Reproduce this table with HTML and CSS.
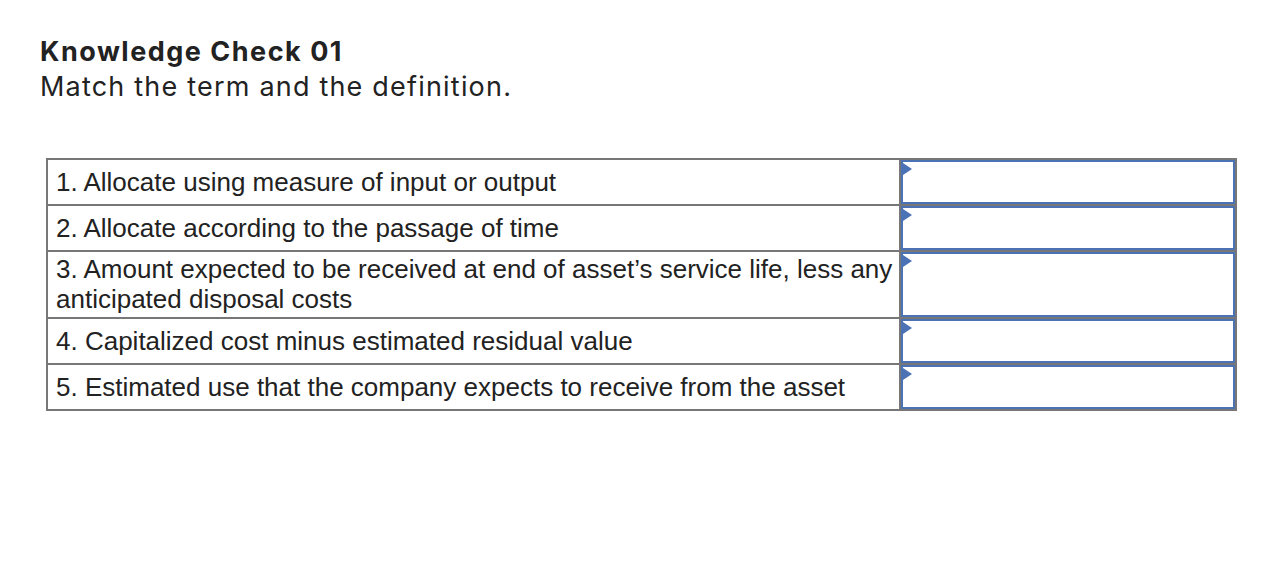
FILE: index.html
```html
<!DOCTYPE html>
<html lang="en">
<head>
<meta charset="utf-8">
<title>Knowledge Check 01</title>
<link rel="stylesheet" href="styles.css">
</head>
<body>
<main class="page">
  <header class="intro">
    <h1 class="title">Knowledge Check 01</h1>
    <p class="subtitle">Match the term and the definition.</p>
  </header>
  <table class="match">
    <colgroup>
      <col class="col-term">
      <col class="col-answer">
    </colgroup>
    <tbody>
      <tr>
        <td class="term">1. Allocate using measure of input or output</td>
        <td class="answer"><div class="dropbox"><span class="marker"></span></div></td>
      </tr>
      <tr>
        <td class="term">2. Allocate according to the passage of time</td>
        <td class="answer"><div class="dropbox"><span class="marker"></span></div></td>
      </tr>
      <tr>
        <td class="term">3. Amount expected to be received at end of asset’s service life, less any anticipated disposal costs</td>
        <td class="answer"><div class="dropbox tall"><span class="marker"></span></div></td>
      </tr>
      <tr>
        <td class="term">4. Capitalized cost minus estimated residual value</td>
        <td class="answer"><div class="dropbox"><span class="marker"></span></div></td>
      </tr>
      <tr>
        <td class="term">5. Estimated use that the company expects to receive from the asset</td>
        <td class="answer"><div class="dropbox"><span class="marker"></span></div></td>
      </tr>
    </tbody>
  </table>
</main>
</body>
</html>
```

FILE: styles.css
```css
html, body {
  margin: 0;
  padding: 0;
  background: #ffffff;
}

.page {
  padding: 35px 0 0 40px;
  color: #222222;
}

.intro {
  margin-bottom: 55px;
}

.title {
  margin: 0;
  font-family: "Inter", "Liberation Sans", sans-serif;
  font-weight: 700;
  font-size: 27px;
  line-height: 33px;
  letter-spacing: 1.5px;
  color: #222222;
}

.subtitle {
  margin: 3px 0 0;
  font-family: "Inter", "Liberation Sans", sans-serif;
  font-weight: 400;
  font-size: 27px;
  line-height: 32px;
  letter-spacing: 1.2px;
  color: #222222;
}

.match {
  margin-left: 6px;
  width: 1189px;
  border-collapse: collapse;
  table-layout: fixed;
  font-family: "Liberation Sans", Arial, sans-serif;
  font-size: 26px;
  color: #222222;
}

.col-term {
  width: 853px;
}

.col-answer {
  width: 336px;
}

.match td {
  border: 2px solid #777777;
  vertical-align: middle;
}

.term {
  padding: 2px 2px 3px 8px;
  line-height: 30px;
}

.answer {
  padding: 0;
  height: 44px;
}

.dropbox {
  position: relative;
  box-sizing: border-box;
  height: 44px;
  border: 2px solid #4a72b4;
}

.dropbox.tall {
  height: 65px;
}

.marker {
  position: absolute;
  top: 1px;
  left: 0;
  width: 0;
  height: 0;
  border-top: 6px solid transparent;
  border-bottom: 6px solid transparent;
  border-left: 9px solid #4a72b4;
}
```
